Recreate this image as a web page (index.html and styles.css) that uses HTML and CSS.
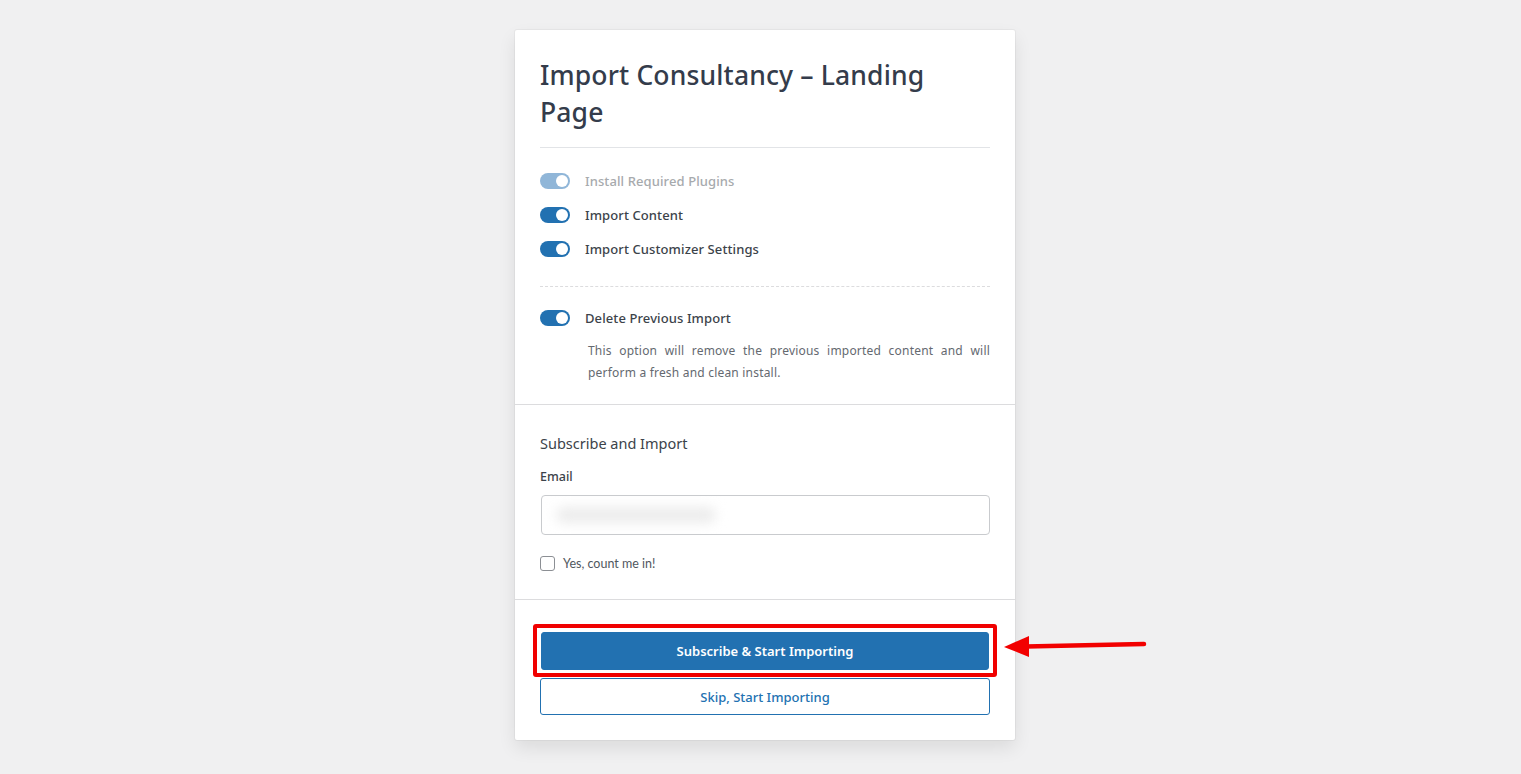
FILE: index.html
```html
<!DOCTYPE html>
<html lang="en">
<head>
<meta charset="utf-8">
<title>Import Consultancy – Landing Page</title>
<link rel="stylesheet" href="styles.css">
</head>
<body>
<div class="page">
  <div class="card">
    <section class="section section-options">
      <h1 class="title">Import Consultancy – Landing Page</h1>
      <hr class="rule">
      <div class="toggle-row is-disabled">
        <span class="toggle"><span class="knob"></span></span>
        <span class="toggle-label">Install Required Plugins</span>
      </div>
      <div class="toggle-row">
        <span class="toggle"><span class="knob"></span></span>
        <span class="toggle-label">Import Content</span>
      </div>
      <div class="toggle-row">
        <span class="toggle"><span class="knob"></span></span>
        <span class="toggle-label">Import Customizer Settings</span>
      </div>
      <hr class="rule-dashed">
      <div class="toggle-row">
        <span class="toggle"><span class="knob"></span></span>
        <span class="toggle-label">Delete Previous Import</span>
      </div>
      <p class="desc">This option will remove the previous imported content and will perform a fresh and clean install.</p>
    </section>
    <section class="section section-subscribe">
      <h2 class="sub-title">Subscribe and Import</h2>
      <label class="field-label">Email</label>
      <div class="field"><span class="blurred"></span></div>
      <div class="check-row">
        <span class="checkbox"></span>
        <span class="check-label">Yes, count me in!</span>
      </div>
    </section>
    <section class="section section-actions">
      <div class="highlight">
        <button class="btn btn-primary">Subscribe &amp; Start Importing</button>
      </div>
      <button class="btn btn-secondary">Skip, Start Importing</button>
    </section>
    <svg class="arrow" width="150" height="36" viewBox="0 0 150 36">
      <line x1="24" y1="16.5" x2="142" y2="14" stroke="#f20000" stroke-width="4.5" stroke-linecap="round"/>
      <polygon points="2,17 27,6 27,27" fill="#f20000"/>
    </svg>
  </div>
</div>
</body>
</html>
```
FILE: styles.css
```css
* { box-sizing: border-box; }
html, body { margin: 0; padding: 0; }
body {
  background: #f0f0f1;
  font-family: "Noto Sans", "Open Sans", sans-serif;
  color: #3c434a;
}
.page {
  display: flex;
  justify-content: center;
  padding: 30px 0 34px 9px;
}
.card {
  position: relative;
  width: 500px;
  background: #fff;
  border-radius: 2px;
  box-shadow: 0 0 0 1px rgba(0,0,0,0.035), 0 8px 18px rgba(0,0,0,0.09);
}
.section { padding: 0 25px; }
.section-options {
  padding-top: 27px;
  padding-bottom: 20px;
  border-bottom: 1px solid #dcdcde;
}
.title {
  margin: 0;
  font-size: 26.5px;
  line-height: 37px;
  font-weight: 500;
  color: #343c4b;
  letter-spacing: 0.15px;
  padding-right: 60px;
}
.rule {
  margin: 16px 0 16px;
  border: 0;
  border-top: 1px solid #e2e4e7;
}
.rule-dashed {
  margin: 20px 0 14px;
  border: 0;
  border-top: 1px dashed #dcdcde;
}
.toggle-row {
  display: flex;
  align-items: center;
  height: 34px;
  gap: 15px;
}
.toggle {
  position: relative;
  width: 30px;
  height: 16px;
  border-radius: 8px;
  background: #2271b1;
  flex: none;
}
.knob {
  position: absolute;
  right: 2px;
  top: 2px;
  width: 12px;
  height: 12px;
  border-radius: 50%;
  background: #fff;
}
.toggle-label {
  font-size: 13px;
  font-weight: 500;
  color: #3c434a;
  letter-spacing: 0.1px;
}
.is-disabled .toggle { background: #90b6d8; }
.is-disabled .toggle-label { color: #a7aaad; }
.desc {
  margin: 5px 0 0 48px;
  font-size: 12px;
  line-height: 22px;
  text-align: justify;
  color: #646970;
  letter-spacing: 0.2px;
}
.section-subscribe {
  padding-top: 27px;
  padding-bottom: 26px;
  border-bottom: 1px solid #dcdcde;
}
.sub-title {
  margin: 0;
  font-size: 14.5px;
  line-height: 22px;
  font-weight: 400;
  color: #3c434a;
}
.field-label {
  display: block;
  margin-top: 13px;
  font-size: 12.5px;
  line-height: 20px;
  font-weight: 500;
  color: #3c434a;
}
.field {
  margin: 8px 0 0 1px;
  height: 40px;
  border: 1px solid #c9cbce;
  border-radius: 4px;
  background: #fff;
  display: flex;
  align-items: center;
  padding-left: 14px;
  overflow: hidden;
}
.blurred {
  display: block;
  width: 160px;
  height: 16px;
  border-radius: 8px;
  background: #ececec;
  filter: blur(6px);
}
.check-row {
  display: flex;
  align-items: center;
  gap: 8px;
  margin-top: 18px;
  height: 20px;
}
.checkbox {
  width: 15px;
  height: 15px;
  border: 1px solid #8c8f94;
  border-radius: 3px;
  background: #fff;
  flex: none;
}
.check-label {
  font-family: "Lato", "Noto Sans", sans-serif;
  font-size: 12.5px;
  color: #50575e;
}
.section-actions {
  padding-top: 24px;
  padding-bottom: 25px;
}
.highlight {
  margin: 0 -7px 0 -7px;
  border: 4px solid #f00000;
  border-radius: 3px;
  padding: 4px 4px 3px 4px;
}
.btn {
  display: block;
  width: 100%;
  font-family: "Noto Sans", "Open Sans", sans-serif;
  font-size: 13px;
  border-radius: 3px;
  cursor: pointer;
}
.btn-primary {
  height: 38px;
  background: #2271b1;
  border: 1px solid #2271b1;
  color: #fff;
  font-weight: 600;
}
.btn-secondary {
  margin-top: 1px;
  height: 37px;
  background: #fff;
  border: 1px solid #2271b1;
  color: #2271b1;
  font-weight: 500;
}
.arrow {
  position: absolute;
  left: 487px;
  top: 600px;
}
```
